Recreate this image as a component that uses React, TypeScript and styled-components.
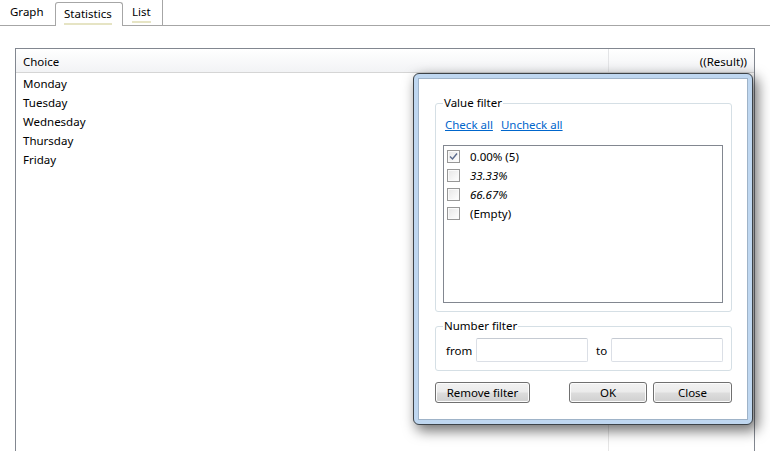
import styled, { createGlobalStyle } from "styled-components";

const GlobalStyle = createGlobalStyle`
  html, body {
    margin: 0;
    padding: 0;
    background: #fff;
  }
  body {
    font-family: "Segoe UI", "Noto Sans", sans-serif;
    font-size: 11.5px;
    color: #000;
  }
  * {
    box-sizing: border-box;
  }
`;

const days = ["Monday", "Tuesday", "Wednesday", "Thursday", "Friday"];

const values = [
  { label: "0.00% (5)", checked: true, italic: false },
  { label: "33.33%", checked: false, italic: true },
  { label: "66.67%", checked: false, italic: true },
  { label: "(Empty)", checked: false, italic: false },
];

const tabs = [
  { name: "Graph", width: 55, active: false, marked: false, edge: false },
  { name: "Statistics", width: 68, active: true, marked: true, edge: false },
  { name: "List", width: 40, active: false, marked: true, edge: true },
];

function CheckMark() {
  return (
    <svg width="9" height="9" viewBox="0 0 9 9">
      <path d="M1 4.5 L3.5 7 L8 1.5" fill="none" stroke="#5a6a8c" strokeWidth="1.4" />
    </svg>
  );
}

export default function App() {
  return (
    <Page>
      <GlobalStyle />
      <TabStrip>
        {tabs.map(t => (
          <Tab key={t.name} $active={t.active} $edge={t.edge} style={{ width: t.width }}>
            <TabLabel $marked={t.marked}>{t.name}</TabLabel>
          </Tab>
        ))}
      </TabStrip>

      <Content>
        <Grid>
          <GridHeader>
            <HeadCell>Choice</HeadCell>
            <HeadCell $right>((Result))</HeadCell>
          </GridHeader>
          <GridBody>
            <Column>
              {days.map(d => (
                <Row key={d}>{d}</Row>
              ))}
            </Column>
            <Column $divider />
          </GridBody>
        </Grid>
      </Content>

      <Dialog>
        <DialogInner>
          <GroupBox>
            <Legend>Value filter</Legend>
            <LinkRow>
              <Link>Check all</Link>
              <Link>Uncheck all</Link>
            </LinkRow>
            <ListBox>
              {values.map(v => (
                <ListItem key={v.label}>
                  <CheckBox>{v.checked && <CheckMark />}</CheckBox>
                  <ItemText $italic={v.italic}>{v.label}</ItemText>
                </ListItem>
              ))}
            </ListBox>
          </GroupBox>

          <GroupBox $gap>
            <Legend>Number filter</Legend>
            <FieldRow>
              <FieldLabel $w={30}>from</FieldLabel>
              <TextInput />
              <FieldLabel $w={23} $pad={8}>to</FieldLabel>
              <TextInput />
            </FieldRow>
          </GroupBox>

          <ButtonRow>
            <Button $w={95}>Remove filter</Button>
            <ButtonGroup>
              <Button $w={78}>OK</Button>
              <Button $w={79}>Close</Button>
            </ButtonGroup>
          </ButtonRow>
        </DialogInner>
      </Dialog>
    </Page>
  );
}

const Page = styled.div`
  position: relative;
  width: 770px;
  height: 451px;
  overflow: hidden;
  background: #fff;
`;

const TabStrip = styled.div`
  display: flex;
  align-items: flex-end;
  height: 26px;
  border-bottom: 1px solid #a6a6a6;
`;

const Tab = styled.div<{ $active?: boolean; $edge?: boolean }>`
  display: flex;
  align-items: center;
  padding-left: ${p => (p.$active ? 8 : 9)}px;
  padding-top: 2px;
  height: ${p => (p.$active ? 24 : 25)}px;
  margin-bottom: ${p => (p.$active ? -1 : 0)}px;
  background: #fff;
  border: ${p => (p.$active ? "1px solid #a6a6a6" : "none")};
  border-bottom: none;
  border-right: ${p => (p.$active || p.$edge ? "1px solid #a6a6a6" : "none")};
  border-radius: ${p => (p.$active ? "3px 3px 0 0" : "0")};
  &:first-child {
    padding-left: 10px;
  }
`;

const TabLabel = styled.span<{ $marked?: boolean }>`
  line-height: 16px;
  padding-bottom: 1px;
  border-bottom: 2px solid ${p => (p.$marked ? "#e6e4c4" : "transparent")};
`;

const Content = styled.div`
  padding: 22px 15px 0 15px;
`;

const Grid = styled.div`
  width: 740px;
  height: 420px;
  border: 1px solid #828790;
  border-bottom: none;
  display: flex;
  flex-direction: column;
`;

const GridHeader = styled.div`
  display: grid;
  grid-template-columns: 593px 1fr;
  height: 24px;
  background: linear-gradient(#ffffff, #f2f3f5);
  border-bottom: 1px solid #d5d5d5;
`;

const HeadCell = styled.div<{ $right?: boolean }>`
  display: flex;
  align-items: center;
  justify-content: ${p => (p.$right ? "flex-end" : "flex-start")};
  padding: 2px 7px 0 7px;
  border-right: ${p => (p.$right ? "none" : "1px solid #e3e4e6")};
`;

const GridBody = styled.div`
  flex: 1;
  display: grid;
  grid-template-columns: 593px 1fr;
`;

const Column = styled.div<{ $divider?: boolean }>`
  padding-top: 1px;
  border-left: ${p => (p.$divider ? "1px solid #e6e6e6" : "none")};
  margin-left: ${p => (p.$divider ? -1 : 0)}px;
`;

const Row = styled.div`
  height: 19px;
  line-height: 19px;
  padding-left: 7px;
`;

const Dialog = styled.div`
  position: absolute;
  left: 413px;
  top: 73px;
  width: 340px;
  height: 352px;
  padding: 4px;
  background: #bfd7f0;
  border: 1px solid #3d4348;
  border-radius: 6px;
  box-shadow: 4px 5px 13px 1px rgba(0, 0, 0, 0.55);
`;

const DialogInner = styled.div`
  height: 100%;
  background: #fff;
  border: 1px solid #9fb3c8;
  padding: 16px 15px 0 16px;
  display: flex;
  flex-direction: column;
`;

const GroupBox = styled.fieldset<{ $gap?: boolean }>`
  margin: ${p => (p.$gap ? "6px 0 0 0" : "0")};
  padding: 0 8px 8px 7px;
  border: 1px solid #d5dfe5;
  border-radius: 3px;
  min-width: 0;
`;

const Legend = styled.legend`
  padding: 0 1px;
  line-height: 16px;
`;

const LinkRow = styled.div`
  display: flex;
  gap: 8px;
  margin: 6px 0 0 2px;
  line-height: 16px;
`;

const Link = styled.a`
  color: #0066cc;
  text-decoration: underline;
  cursor: pointer;
`;

const ListBox = styled.div`
  margin-top: 12px;
  height: 158px;
  border: 1px solid #828790;
  padding: 1px 3px;
`;

const ListItem = styled.div`
  display: flex;
  align-items: center;
  height: 19px;
`;

const CheckBox = styled.span`
  display: flex;
  align-items: center;
  justify-content: center;
  width: 13px;
  height: 13px;
  border: 1px solid #979797;
  background: linear-gradient(135deg, #e6e6e6, #ffffff);
  box-shadow: inset 0 0 0 1px #fafafa;
  margin-right: 10px;
`;

const ItemText = styled.span<{ $italic?: boolean }>`
  font-style: ${p => (p.$italic ? "italic" : "normal")};
`;

const FieldRow = styled.div`
  display: flex;
  align-items: center;
  margin-top: 4px;
  padding-left: 3px;
`;

const FieldLabel = styled.span<{ $w: number; $pad?: number }>`
  width: ${p => p.$w}px;
  padding-left: ${p => p.$pad || 0}px;
  flex: none;
`;

const TextInput = styled.input`
  width: 112px;
  height: 24px;
  border: 1px solid #dbdfe6;
  border-top-color: #c5cad2;
  border-radius: 2px;
  padding: 0 3px;
  font: inherit;
  outline: none;
`;

const ButtonRow = styled.div`
  display: flex;
  justify-content: space-between;
  margin-top: 11px;
`;

const ButtonGroup = styled.div`
  display: flex;
  gap: 6px;
`;

const Button = styled.button<{ $w: number }>`
  width: ${p => p.$w}px;
  height: 21px;
  padding: 0;
  font: inherit;
  color: #000;
  border: 1px solid #707070;
  border-radius: 3px;
  background: linear-gradient(#f2f2f2 0%, #ebebeb 48%, #dddddd 52%, #cfcfcf 100%);
  box-shadow: inset 0 0 0 1px #fcfcfc;
`;
